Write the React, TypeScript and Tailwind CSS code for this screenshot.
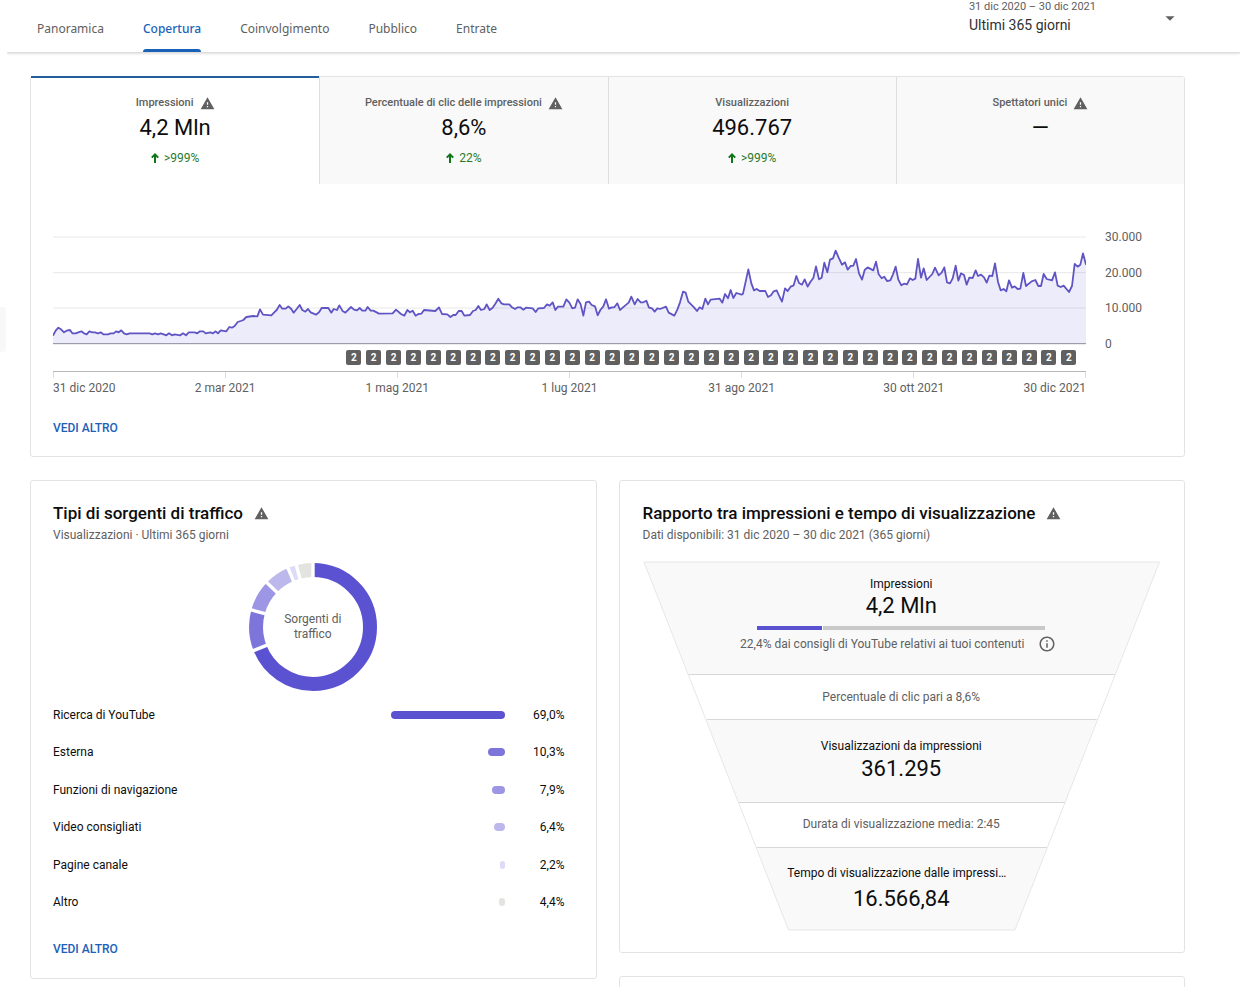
import { useState } from 'react'
import { MdArrowDropDown, MdInfoOutline, MdWarning } from 'react-icons/md'
import clsx from 'clsx'

interface Metric {
  label: string
  value: string
  change?: string
  warning?: boolean
}

interface Source {
  label: string
  value: string
  share: number
  bar: number
  color: string
}

const TABS = ['Panoramica', 'Copertura', 'Coinvolgimento', 'Pubblico', 'Entrate']

const METRICS: Metric[] = [
  { label: 'Impressioni', value: '4,2 Mln', change: '>999%', warning: true },
  { label: 'Percentuale di clic delle impressioni', value: '8,6%', change: '22%', warning: true },
  { label: 'Visualizzazioni', value: '496.767', change: '>999%' },
  { label: 'Spettatori unici', value: '—', warning: true },
]

const SOURCES: Source[] = [
  { label: 'Ricerca di YouTube', value: '69,0%', share: 69, bar: 69, color: '#5b52d2' },
  { label: 'Esterna', value: '10,3%', share: 10.3, bar: 10.3, color: '#7d75da' },
  { label: 'Funzioni di navigazione', value: '7,9%', share: 7.9, bar: 7.9, color: '#9c96e4' },
  { label: 'Video consigliati', value: '6,4%', share: 6.4, bar: 6.4, color: '#bcb8ec' },
  { label: 'Pagine canale', value: '2,2%', share: 2.2, bar: 2.6, color: '#dddbf5' },
  { label: 'Altro', value: '4,4%', share: 4.2, bar: 3.1, color: '#e3e4e0' },
]

const DATES = ['31 dic 2020', '2 mar 2021', '1 mag 2021', '1 lug 2021', '31 ago 2021', '30 ott 2021', '30 dic 2021']

// x runs over the year (0-3099), y grows downwards with the zero line at 370
const SERIES =
  '0,347 8,332 16,323 24,328 33,337 41,332 51,330 58,340 68,340 76,337 85,334 93,340 101,343 109,334 118,337 126,337 135,340 143,337 151,343 165,343 173,340 182,340 189,334 197,337 205,331 213,340 221,343 230,340 290,340 298,343 306,340 315,343 323,340 332,343 340,346 348,340 357,346 365,343 382,346 390,340 399,346 407,337 425,337 433,340 441,334 451,334 458,340 472,337 480,340 487,334 495,340 503,331 520,334 529,321 537,323 545,318 554,306 563,303 571,300 580,291 600,288 613,289 621,268 630,284 655,286 663,278 671,270 680,255 688,266 698,266 706,259 715,267 722,278 731,267 740,255 748,270 757,275 765,267 773,277 789,284 ' +
  '798,277 806,264 826,264 835,278 842,267 852,270 859,256 868,272 877,278 894,261 903,269 912,271 920,264 928,272 937,272 944,261 953,272 961,272 978,281 1019,280 1029,269 1044,282 1054,287 1063,270 1071,277 1079,272 1088,287 1096,282 1105,281 1113,270 1147,273 1158,262 1167,282 1183,283 1192,291 1201,285 1208,285 1217,273 1226,273 1234,287 1251,285 1260,273 1268,270 1276,258 1284,270 1294,267 1301,253 1310,270 1319,263 1327,251 1336,236 1345,250 1353,253 1369,253 1377,262 1386,267 1394,262 1402,262 1411,269 1419,263 1439,265 1448,276 1456,265 1473,264 1482,253 1490,257 1499,247 1507,270 1515,260 1531,260 1540,238 1549,248 1558,265 1566,263 1574,238 1583,253 ' +
  '1591,287 1599,247 1608,245 1616,255 1626,259 1634,286 1642,270 1651,259 1659,238 1668,266 1676,262 1684,262 1693,250 1701,270 1709,263 1727,248 1735,230 1745,253 1754,237 1763,247 1771,247 1780,242 1788,263 1797,265 1805,275 1813,265 1821,267 1839,260 1847,278 1864,287 1873,269 1881,247 1890,215 1898,218 1906,245 1923,262 1932,273 1940,262 1948,267 1957,236 1965,253 1973,239 2000,236 2008,248 2016,222 2025,235 2033,210 2041,234 2050,219 2066,224 2070,221 2078,185 2086,148 2095,190 2103,211 2111,207 2120,213 2137,213 2145,231 2154,226 2162,214 2171,211 2180,231 2187,245 2196,205 2204,213 2213,200 2222,196 2230,168 2238,189 2247,194 2255,178 2264,200 2272,186 2281,174 2289,139 2298,178 2306,173 2314,128 2323,157 2331,119 2340,115 2348,92 2357,113 2367,134 2376,127 2384,149 2393,138 ' +
  '2401,137 2409,117 2418,160 2427,179 2435,150 2444,142 2461,151 2469,125 2477,163 2486,175 2494,170 2502,183 2512,181 2520,163 2528,140 2536,179 2545,196 2553,191 2562,193 2571,175 2579,180 2587,176 2595,117 2604,173 2612,145 2621,180 2638,162 2646,143 2657,166 2666,158 2674,142 2682,187 2691,190 2699,175 2708,137 2716,182 2724,160 2733,165 2741,194 2749,173 2759,174 2768,151 2775,168 2784,164 2793,172 2801,188 2809,167 2818,168 2826,130 2835,186 2843,211 2852,207 2860,214 2868,181 2877,203 2885,199 2894,207 2902,206 2911,159 2919,198 2936,184 2947,180 2956,198 2964,198 2972,162 2981,177 2997,181 3006,157 3014,197 3023,201 3032,197 3048,216 3057,198 3065,132 3074,140 3082,134 3090,100 3099,134'

export default function App() {
  return (
    <div className="flex min-h-screen bg-white font-['Roboto',sans-serif] text-[#0d0d0d]">
      <div className="w-[7px] shrink-0 pt-[307px]">
        <div className="h-[45px] w-1.5 rounded-r-sm bg-[#f8f8f8]" />
      </div>
      <div className="h-screen min-w-0 flex-1 overflow-hidden">
        <Header />
        <main className="flex flex-col gap-[23px] pt-[23px] pr-[55px] pl-[23px]">
          <OverviewCard />
          <div className="grid grid-cols-2 items-start gap-[22px]">
            <SourcesCard />
            <div className="flex flex-col gap-[23px]">
              <FunnelCard />
              <section className="h-40 rounded-[3px] border border-[#e3e3e3]" />
            </div>
          </div>
        </main>
      </div>
    </div>
  )
}

function Header() {
  const [active, setActive] = useState('Copertura')

  return (
    <header className="flex h-[53px] items-start justify-between border-b border-[#dedede] pr-[65px] pl-[30px] shadow-[0_1px_2px_rgba(0,0,0,0.12)]">
      <nav className="flex h-[52px] gap-[39px] font-['Noto_Sans',sans-serif] text-xs">
        {TABS.map((tab) => (
          <button
            key={tab}
            onClick={() => setActive(tab)}
            className={clsx(
              'flex flex-col items-center pt-5',
              tab === active ? 'font-medium text-[#1a62b8]' : 'text-[#606060]',
            )}
          >
            <span className="leading-[18px]">{tab}</span>
            {tab === active && <span className="mt-auto h-[3px] w-full rounded-t-sm bg-[#1a62b8]" />}
          </button>
        ))}
      </nav>
      <button className="flex items-center gap-[63px] text-left">
        <span className="flex flex-col">
          <span className="text-[11px] leading-[14px] text-[#606060]">31 dic 2020 – 30 dic 2021</span>
          <span className="text-sm leading-[22px] text-[#303030]">Ultimi 365 giorni</span>
        </span>
        <MdArrowDropDown size={22} className="-mr-1.5 text-[#606060]" />
      </button>
    </header>
  )
}

function OverviewCard() {
  const [selected, setSelected] = useState(0)

  return (
    <section className="rounded-[3px] border border-[#e3e3e3]">
      <div className="grid grid-cols-4">
        {METRICS.map((metric, i) => (
          <button
            key={metric.label}
            onClick={() => setSelected(i)}
            className={clsx(
              'flex flex-col items-center',
              i === selected
                ? '-mt-px h-[108px] border-t-2 border-[#225e9c] bg-white pt-[17px]'
                : 'h-[107px] border-l border-[#dedede] bg-[#f9f9f9] pt-[18px]',
            )}
          >
            <span className="flex h-4 items-center gap-[6px] text-[11px] font-medium text-[#606060]">
              {metric.label}
              {metric.warning && <MdWarning size={15} />}
            </span>
            <span className="mt-[3px] text-[22px] leading-7">{metric.value}</span>
            {metric.change && (
              <span className="mt-2 flex h-4 items-center gap-[5px] text-xs text-[#2b7a2b]">
                <ArrowUp />
                {metric.change}
              </span>
            )}
          </button>
        ))}
      </div>

      <div className="flex gap-[19px] pt-[45px] pr-[41px] pl-[22px]">
        <div className="min-w-0 flex-1">
          <ImpressionsChart />
          <div className="flex justify-between pr-[0.9%] pl-[28.4%]">
            {Array.from({ length: 37 }, (_, i) => (
              <span
                key={i}
                className="flex size-[15px] items-center justify-center rounded-xs bg-[#606060] text-[10px] leading-none font-bold text-white"
              >
                2
              </span>
            ))}
          </div>
          <div className="mt-1.5 flex h-[37px] justify-between border-t border-[#b8b8b8]">
            {DATES.map((date, i) => (
              <div
                key={date}
                className={clsx(
                  'flex w-0 flex-col text-xs whitespace-nowrap text-[#606060]',
                  i === 0 ? 'items-start' : i === DATES.length - 1 ? 'items-end' : 'items-center',
                )}
              >
                <span className="h-1.5 w-px bg-[#dcdcdc]" />
                <span className="mt-0.5">{date}</span>
              </div>
            ))}
          </div>
        </div>
        <div className="flex h-[123px] w-[38px] flex-col justify-between text-xs text-[#606060]">
          <span>30.000</span>
          <span>20.000</span>
          <span>10.000</span>
          <span>0</span>
        </div>
      </div>

      <div className="px-[22px] pt-3 pb-5">
        <MoreLink />
      </div>
    </section>
  )
}

function ImpressionsChart() {
  return (
    <svg viewBox="0 27 3099 363" preserveAspectRatio="none" className="block h-[121px] w-full">
      {[51, 158, 264].map((y) => (
        <line key={y} x1="0" x2="3099" y1={y} y2={y} stroke="#e8e8e8" vectorEffect="non-scaling-stroke" />
      ))}
      <polygon points={`0,370 ${SERIES} 3099,370`} fill="#5b52d2" fillOpacity="0.11" />
      <line x1="0" x2="3099" y1="371" y2="371" stroke="#8a8a9c" vectorEffect="non-scaling-stroke" />
      <polyline
        points={SERIES}
        fill="none"
        stroke="#5f54c4"
        strokeWidth="1.8"
        strokeLinejoin="round"
        vectorEffect="non-scaling-stroke"
      />
    </svg>
  )
}

function SourcesCard() {
  return (
    <section className="rounded-[3px] border border-[#e3e3e3] pt-5 pr-[31px] pb-[21px] pl-[22px]">
      <CardTitle title="Tipi di sorgenti di traffico" subtitle="Visualizzazioni · Ultimi 365 giorni" />

      <div className="mt-5 grid place-items-center pl-2">
        <Donut />
        <div className="col-start-1 row-start-1 w-20 text-center text-xs leading-[15px] text-[#606060]">
          Sorgenti di traffico
        </div>
      </div>

      <table className="mt-[5px] h-[225px] w-full text-xs">
        <tbody>
          {SOURCES.map((source) => (
            <tr key={source.label}>
              <th scope="row" className="text-left font-normal">{source.label}</th>
              <td className="w-[164px]">
                <div
                  className="ml-auto h-2 rounded-full"
                  style={{ width: `${source.bar}%`, background: source.color }}
                />
              </td>
              <td className="w-[60px] text-right">{source.value}</td>
            </tr>
          ))}
        </tbody>
      </table>

      <div className="mt-5">
        <MoreLink />
      </div>
    </section>
  )
}

function Donut() {
  let start = 0
  const arcs = SOURCES.map((source) => {
    const arc = { color: source.color, start, share: source.share }
    start += source.share
    return arc
  })

  return (
    <svg width="128" height="128" viewBox="0 0 128 128" className="col-start-1 row-start-1">
      {arcs.map((arc) => (
        <circle
          key={arc.color}
          cx="64"
          cy="64"
          r="57"
          fill="none"
          stroke={arc.color}
          strokeWidth="14"
          pathLength="100"
          strokeDasharray={`${arc.share} ${100 - arc.share}`}
          strokeDashoffset={-arc.start}
          transform="rotate(-90 64 64)"
        />
      ))}
      {arcs.map((arc) => (
        <line
          key={arc.start}
          x1="64"
          y1="-1"
          x2="64"
          y2="16"
          stroke="#fff"
          strokeWidth="3.4"
          transform={`rotate(${arc.start * 3.6} 64 64)`}
        />
      ))}
    </svg>
  )
}

function FunnelCard() {
  return (
    <section className="rounded-[3px] border border-[#e3e3e3] pt-5 pr-6 pb-[21px] pl-[23px]">
      <CardTitle title="Rapporto tra impressioni e tempo di visualizzazione" subtitle="Dati disponibili: 31 dic 2020 – 30 dic 2021 (365 giorni)" />

      <div className="mt-[18px] grid text-xs">
        <svg viewBox="0 0 519 370" preserveAspectRatio="none" className="col-start-1 row-start-1 h-[370px] w-full">
          <g fill="#f9f9f9">
            <path d="M1 1H518L473 113H46Z" />
            <path d="M64 159H455L423 241H96Z" />
            <path d="M114 286H405L373 369H146Z" />
          </g>
          <path d="M1 1H518L373 369H146Z" fill="none" stroke="#e6e6e6" />
          <path d="M46 113.5H473M64 158.5H455M96 241.5H423M114 286.5H405" stroke="#d8d8d8" />
        </svg>

        <div className="col-start-1 row-start-1 flex flex-col items-center">
          <div className="flex h-[113px] flex-col items-center pt-[15px]">
            <span>Impressioni</span>
            <span className="text-[22px] leading-7">4,2 Mln</span>
            <div className="mt-[6px] flex h-1 w-72 gap-px">
              <div className="w-[65px] bg-[#5b52d2]" />
              <div className="flex-1 bg-[#c9c9c9]" />
            </div>
            <div className="mt-[5px] flex h-[18px] items-center gap-[14px] pr-1.5 text-[#606060]">
              22,4% dai consigli di YouTube relativi ai tuoi contenuti
              <MdInfoOutline size={18} />
            </div>
          </div>
          <div className="flex h-[46px] items-center text-[#606060]">Percentuale di clic pari a 8,6%</div>
          <div className="flex h-[82px] flex-col items-center pt-[18px]">
            <span>Visualizzazioni da impressioni</span>
            <span className="mt-px text-[22px] leading-7">361.295</span>
          </div>
          <div className="flex h-11 items-center text-[#606060]">Durata di visualizzazione media: 2:45</div>
          <div className="flex w-[228px] flex-col items-center pt-[19px]">
            <span className="w-[222px] self-start truncate">Tempo di visualizzazione dalle impressioni</span>
            <span className="mt-1 text-[22px] leading-7">16.566,84</span>
          </div>
        </div>
      </div>
    </section>
  )
}

function CardTitle({ title, subtitle }: { title: string; subtitle: string }) {
  return (
    <div>
      <div className="flex items-center gap-[11px]">
        <h2 className="text-[17px] leading-6 font-medium">{title}</h2>
        <MdWarning size={15} className="text-[#606060]" />
      </div>
      <p className="mt-0.5 text-xs text-[#606060]">{subtitle}</p>
    </div>
  )
}

function MoreLink() {
  return (
    <a href="#" className="block w-fit text-xs font-medium text-[#1a62b8]">
      VEDI ALTRO
    </a>
  )
}

function ArrowUp() {
  return (
    <svg width="8" height="10" viewBox="0 0 8 10" fill="none" stroke="#107516" strokeWidth="2">
      <path d="M4 10V2M0.8 4.6L4 1.4L7.2 4.6" />
    </svg>
  )
}
